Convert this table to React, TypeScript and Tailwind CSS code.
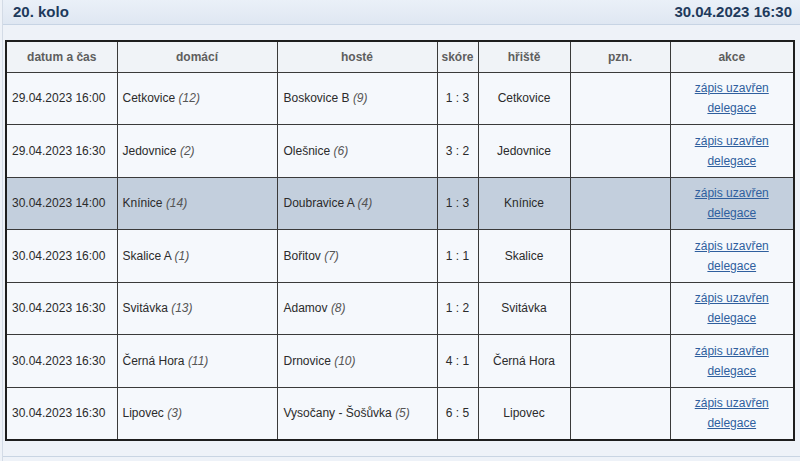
import React from "react";

type Row = {
  dt: string;
  home: string;
  hr: string;
  away: string;
  ar: string;
  score: string;
  field: string;
  hl?: boolean;
};

const rows: Row[] = [
  { dt: "29.04.2023 16:00", home: "Cetkovice", hr: "(12)", away: "Boskovice B", ar: "(9)", score: "1 : 3", field: "Cetkovice" },
  { dt: "29.04.2023 16:30", home: "Jedovnice", hr: "(2)", away: "Olešnice", ar: "(6)", score: "3 : 2", field: "Jedovnice" },
  { dt: "30.04.2023 14:00", home: "Knínice", hr: "(14)", away: "Doubravice A", ar: "(4)", score: "1 : 3", field: "Knínice", hl: true },
  { dt: "30.04.2023 16:00", home: "Skalice A", hr: "(1)", away: "Bořitov", ar: "(7)", score: "1 : 1", field: "Skalice" },
  { dt: "30.04.2023 16:30", home: "Svitávka", hr: "(13)", away: "Adamov", ar: "(8)", score: "1 : 2", field: "Svitávka" },
  { dt: "30.04.2023 16:30", home: "Černá Hora", hr: "(11)", away: "Drnovice", ar: "(10)", score: "4 : 1", field: "Černá Hora" },
  { dt: "30.04.2023 16:30", home: "Lipovec", hr: "(3)", away: "Vysočany - Šošůvka", ar: "(5)", score: "6 : 5", field: "Lipovec" },
];

const th = "border border-[#3a3a3a] font-bold text-[#5e5e5e] text-center align-middle p-0";
const td = "border border-[#3a3a3a] align-middle p-0";

export default function App() {
  return (
    <div
      className="w-[800px] h-[461px] bg-[#eef2f8] overflow-hidden text-[12px] text-[#2b2b2b]"
      style={{ fontFamily: '"Liberation Sans", Arial, sans-serif' }}
    >
      <div className="h-full ml-[2px] border-l border-[#d3dbe6] flex flex-col">
        <div className="h-[25px] flex items-center justify-between pl-[10px] pr-[8px] bg-gradient-to-b from-[#eaf0f8] to-[#dfe7f2] border-b border-[#c7d4e4] text-[15px] font-bold text-[#1e3a5c]">
          <span>20. kolo</span>
          <span>30.04.2023 16:30</span>
        </div>
        <div className="pt-[15px] pl-[2px]">
          <table className="border-collapse border-2 border-[#1e1e1e] w-[788px] table-fixed bg-[#f5f8fc]">
            <colgroup>
              <col className="w-[111px]" />
              <col className="w-[160px]" />
              <col className="w-[160px]" />
              <col className="w-[41px]" />
              <col className="w-[92px]" />
              <col className="w-[100px]" />
              <col className="w-[124px]" />
            </colgroup>
            <thead>
              <tr className="h-[31px] bg-[#f0f3f7]">
                <th className={th}>datum a čas</th>
                <th className={th}>domácí</th>
                <th className={th}>hosté</th>
                <th className={th}>skóre</th>
                <th className={th}>hřiště</th>
                <th className={th}>pzn.</th>
                <th className={th}>akce</th>
              </tr>
            </thead>
            <tbody>
              {rows.map((r, i) => (
                <tr key={i} className={`h-[52.5px] ${r.hl ? "bg-[#c3cfdd]" : "bg-[#f5f8fc]"}`}>
                  <td className={`${td} pl-[5px]`}>{r.dt}</td>
                  <td className={`${td} pl-[5px]`}>
                    {r.home} <i className="text-[#555]">{r.hr}</i>
                  </td>
                  <td className={`${td} pl-[6px]`}>
                    {r.away} <i className="text-[#555]">{r.ar}</i>
                  </td>
                  <td className={`${td} text-center`}>{r.score}</td>
                  <td className={`${td} text-center`}>{r.field}</td>
                  <td className={td}></td>
                  <td className={`${td} text-center leading-[20px]`}>
                    <a href="#" className="text-[#2f5f9e] underline">zápis uzavřen</a>
                    <br />
                    <a href="#" className="text-[#2f5f9e] underline">delegace</a>
                  </td>
                </tr>
              ))}
            </tbody>
          </table>
        </div>
        <div className="mt-[15px] border-b border-[#c9d5e3]"></div>
      </div>
    </div>
  );
}
